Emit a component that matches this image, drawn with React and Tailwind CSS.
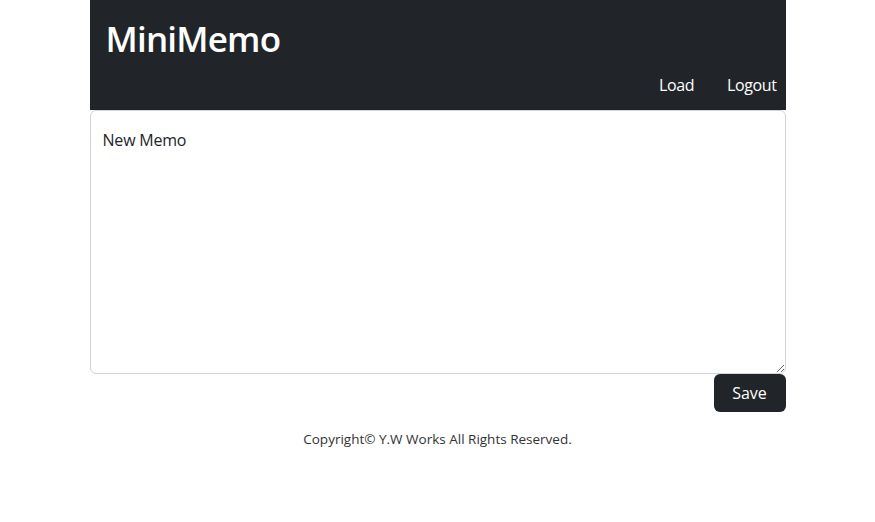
export default function App() {
    return (
        <div className="min-h-[522px] bg-white" style={{ fontFamily: '"Open Sans", "Noto Sans", sans-serif' }}>
            <div className="mx-auto w-[696px]">
                <header className="bg-[#212529] h-[110px] flex flex-col">
                    <h1 className="text-white text-[35px] font-semibold leading-none pl-4 pt-[21px] tracking-[-0.8px]">MiniMemo</h1>
                    <nav className="mt-auto flex justify-end gap-[33px] pr-[9px] pb-[13px] text-white text-[16px] leading-6 tracking-[-0.4px]">
                        <a>Load</a>
                        <a>Logout</a>
                    </nav>
                </header>
                <textarea
                    className="block w-full h-[264px] border border-[#ced4da] rounded-[6px] px-3 pt-[17px] text-[16px] leading-6 text-[#212529] outline-none resize-y tracking-[-0.2px]"
                    defaultValue="New Memo"
                />
                <div className="flex justify-end">
                    <button className="bg-[#212529] text-white text-[16px] w-[72px] h-[38px] rounded-[6px]">Save</button>
                </div>
                <p className="text-center text-[13.5px] text-[#333] mt-[17px]">Copyright© Y.W Works All Rights Reserved.</p>
            </div>
        </div>
    )
}
